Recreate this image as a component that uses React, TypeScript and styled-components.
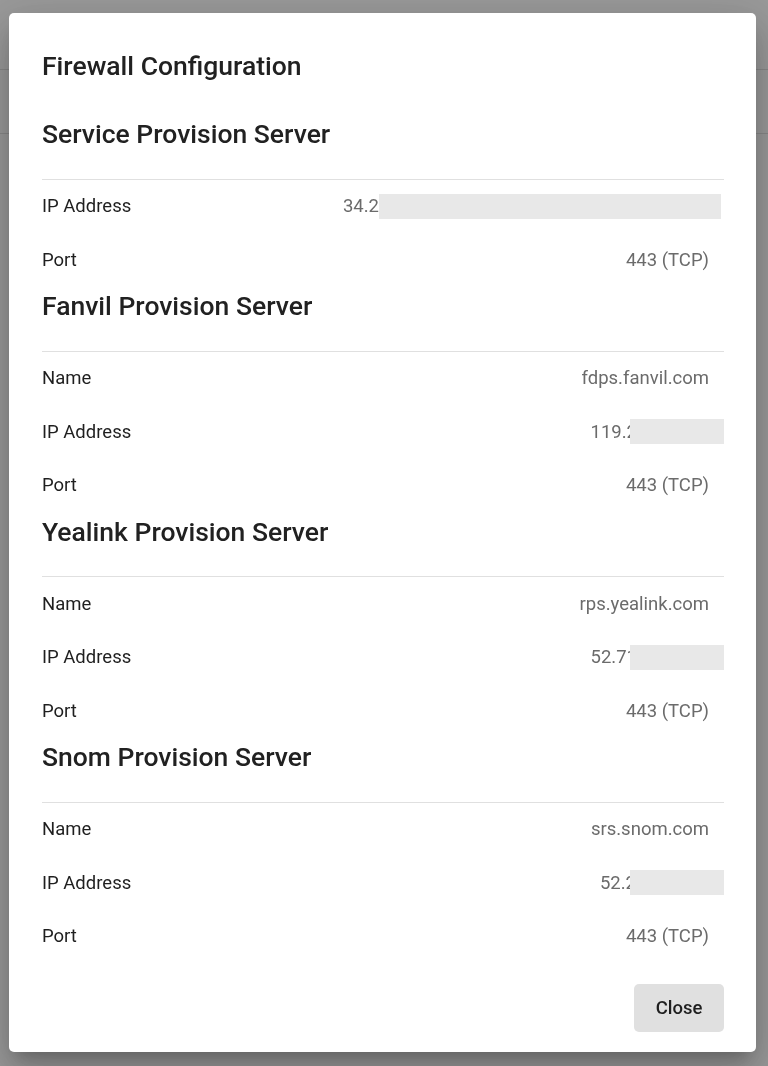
import React from 'react';
import styled, { createGlobalStyle } from 'styled-components';

type Row = {
  label: string;
  value: string;
  redact?: number; // width of the masked part
  overhang?: number; // how far the mask runs past the value padding
  overlap?: number; // how much of the last glyph the mask hides
};

type Section = {
  title: string;
  rows: Row[];
};

const sections: Section[] = [
  {
    title: 'Service Provision Server',
    rows: [
      { label: 'IP Address', value: '34.2', redact: 342, overhang: 12 },
      { label: 'Port', value: '443 (TCP)' }
    ]
  },
  {
    title: 'Fanvil Provision Server',
    rows: [
      { label: 'Name', value: 'fdps.fanvil.com' },
      { label: 'IP Address', value: '119.2', redact: 94, overhang: 15, overlap: 7 },
      { label: 'Port', value: '443 (TCP)' }
    ]
  },
  {
    title: 'Yealink Provision Server',
    rows: [
      { label: 'Name', value: 'rps.yealink.com' },
      { label: 'IP Address', value: '52.71', redact: 94, overhang: 15, overlap: 7 },
      { label: 'Port', value: '443 (TCP)' }
    ]
  },
  {
    title: 'Snom Provision Server',
    rows: [
      { label: 'Name', value: 'srs.snom.com' },
      { label: 'IP Address', value: '52.2', redact: 94, overhang: 15, overlap: 6 },
      { label: 'Port', value: '443 (TCP)' }
    ]
  }
];

export default function App() {
  return (
    <>
      <GlobalStyle />
      <Page>
        <PageHeader />
        <PageRow />
      </Page>
      <Backdrop>
        <Dialog role="dialog" aria-labelledby="fw-title">
          <Title id="fw-title">Firewall Configuration</Title>
          {sections.map(section => (
            <Block key={section.title}>
              <SectionTitle>{section.title}</SectionTitle>
              <Divider />
              {section.rows.map(row => (
                <InfoRow key={row.label}>
                  <Label>{row.label}</Label>
                  <Value>
                    {row.value}
                    {row.redact && (
                      <Mask
                        $width={row.redact}
                        $overhang={row.overhang || 0}
                        $overlap={row.overlap || 0}
                      />
                    )}
                  </Value>
                </InfoRow>
              ))}
            </Block>
          ))}
          <Actions>
            <CloseButton type="button">Close</CloseButton>
          </Actions>
        </Dialog>
      </Backdrop>
    </>
  );
}

const GlobalStyle = createGlobalStyle`
  * { box-sizing: border-box; }
  html, body {
    margin: 0;
    padding: 0;
    background: #fff;
    font-family: Roboto, "Liberation Sans", Arial, sans-serif;
  }
`;

const Page = styled.div`
  height: 1066px;
  overflow: hidden;
`;

const PageHeader = styled.div`
  height: 70px;
  border-bottom: 1px solid #e2e2e2;
`;

const PageRow = styled.div`
  height: 64px;
  border-bottom: 1px solid #e2e2e2;
`;

const Backdrop = styled.div`
  position: fixed;
  inset: 0;
  background: rgba(0, 0, 0, 0.4);
  padding: 13px 12px 0 9px;
`;

const Dialog = styled.div`
  width: 747px;
  height: 1039px;
  background: #fff;
  border-radius: 5px;
  padding: 37px 32px 0 33px;
  box-shadow: 0 11px 15px -7px rgba(0, 0, 0, 0.2),
    0 24px 38px 3px rgba(0, 0, 0, 0.14), 0 9px 46px 8px rgba(0, 0, 0, 0.12);
  display: flex;
  flex-direction: column;
`;

const Title = styled.h2`
  margin: 0;
  font-size: 26.5px;
  line-height: 32px;
  font-weight: 500;
  color: #212121;
`;

const Block = styled.section`
  display: flex;
  flex-direction: column;
`;

const SectionTitle = styled.h3`
  margin: 3.5px 0 28.5px;
  font-size: 26.5px;
  line-height: 32px;
  font-weight: 500;
  color: #212121;
  ${Block}:first-of-type & {
    margin-top: 36px;
  }
`;

const Divider = styled.hr`
  margin: 0;
  border: 0;
  border-top: 1px solid #e0e0e0;
`;

const InfoRow = styled.div`
  height: 53.5px;
  display: flex;
  align-items: center;
  justify-content: space-between;
  padding-right: 15px;
`;

const Label = styled.span`
  font-size: 18.5px;
  color: #1f1f1f;
`;

const Value = styled.span`
  display: flex;
  align-items: center;
  font-size: 18.5px;
  color: #6b6b6b;
`;

const Mask = styled.span<{ $width: number; $overhang: number; $overlap: number }>`
  display: inline-block;
  width: ${p => p.$width}px;
  height: 25px;
  margin-left: -${p => p.$overlap}px;
  margin-right: -${p => p.$overhang}px;
  background: #e8e8e8;
`;

const Actions = styled.div`
  margin-top: 21px;
  display: flex;
  justify-content: flex-end;
`;

const CloseButton = styled.button`
  width: 90px;
  height: 48px;
  border: 0;
  border-radius: 5px;
  background: #e0e0e0;
  color: #1f1f1f;
  font-family: Roboto, "Liberation Sans", Arial, sans-serif;
  font-size: 18.5px;
  font-weight: 500;
  cursor: pointer;
`;
